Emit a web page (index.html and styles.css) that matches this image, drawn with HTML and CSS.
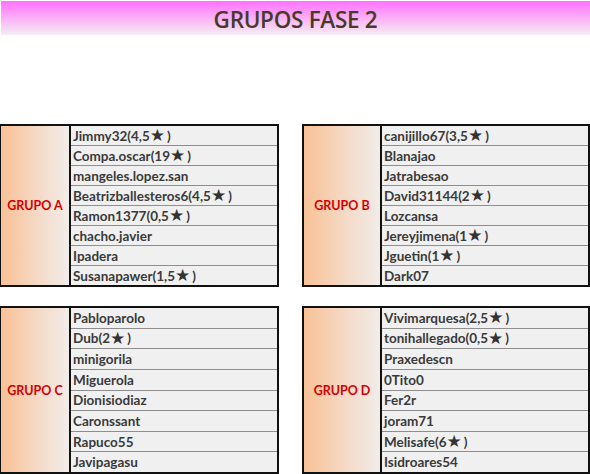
FILE: index.html
```html
<!DOCTYPE html>
<html>
<head>
<meta charset="utf-8">
<link rel="stylesheet" href="styles.css">
</head>
<body>
<header class="banner"><h1 class="title">GRUPOS FASE 2</h1></header>
<main class="groups">
  <section class="group group-left">
    <div class="label"><span>GRUPO A</span></div>
    <ul class="names">
      <li>Jimmy32(4,5<span class="star">★</span>)</li>
      <li>Compa.oscar(19<span class="star">★</span>)</li>
      <li>mangeles.lopez.san</li>
      <li>Beatrizballesteros6(4,5<span class="star">★</span>)</li>
      <li>Ramon1377(0,5<span class="star">★</span>)</li>
      <li>chacho.javier</li>
      <li>Ipadera</li>
      <li>Susanapawer(1,5<span class="star">★</span>)</li>
    </ul>
  </section>
  <section class="group group-right">
    <div class="label"><span>GRUPO B</span></div>
    <ul class="names">
      <li>canijillo67(3,5<span class="star">★</span>)</li>
      <li>Blanajao</li>
      <li>Jatrabesao</li>
      <li>David31144(2<span class="star">★</span>)</li>
      <li>Lozcansa</li>
      <li>Jereyjimena(1<span class="star">★</span>)</li>
      <li>Jguetin(1<span class="star">★</span>)</li>
      <li>Dark07</li>
    </ul>
  </section>
  <section class="group group-left tall">
    <div class="label"><span>GRUPO C</span></div>
    <ul class="names">
      <li>Pabloparolo</li>
      <li>Dub(2<span class="star">★</span>)</li>
      <li>minigorila</li>
      <li>Miguerola</li>
      <li>Dionisiodiaz</li>
      <li>Caronssant</li>
      <li>Rapuco55</li>
      <li>Javipagasu</li>
    </ul>
  </section>
  <section class="group group-right tall">
    <div class="label"><span>GRUPO D</span></div>
    <ul class="names">
      <li>Vivimarquesa(2,5<span class="star">★</span>)</li>
      <li>tonihallegado(0,5<span class="star">★</span>)</li>
      <li>Praxedescn</li>
      <li>0Tito0</li>
      <li>Fer2r</li>
      <li>joram71</li>
      <li>Melisafe(6<span class="star">★</span>)</li>
      <li>Isidroares54</li>
    </ul>
  </section>
</main>
</body>
</html>
```
FILE: styles.css
```css
html, body {
  margin: 0;
  padding: 0;
  background: #ffffff;
}
body {
  width: 590px;
  height: 474px;
  overflow: hidden;
  font-family: Lato, "Open Sans", "Liberation Sans", sans-serif;
}
.banner {
  margin: 1px 0 0 1px;
  height: 34px;
  background: linear-gradient(to bottom, #ff70ff 0%, #fbb6f6 55%, #f4eef4 100%);
  display: flex;
  align-items: center;
  justify-content: center;
}
.title {
  margin: 0;
  font-family: "Open Sans", Lato, sans-serif;
  font-size: 22.5px;
  font-weight: 600;
  color: #483a26;
  letter-spacing: -0.3px;
  padding-top: 2px;
}
.groups {
  margin-top: 89px;
  display: grid;
  grid-template-columns: 280px 288px;
  column-gap: 23px;
  row-gap: 19px;
  margin-left: -1px;
}
.group {
  display: flex;
  border: 2px solid #111111;
  height: 159px;
}
.group.tall {
  height: 164px;
}
.label {
  background: linear-gradient(to right, #f9c196 0%, #f4dccb 60%, #f1ece9 100%);
  border-right: 2px solid #111111;
  display: flex;
  align-items: center;
  justify-content: center;
  font-weight: 700;
  font-size: 12.5px;
  color: #d40000;
}
.group-left .label { width: 68px; }
.group-right .label { width: 76px; }
.names {
  list-style: none;
  margin: 0;
  padding: 0;
  flex: 1;
  display: flex;
  flex-direction: column;
  background: #f0f0f0;
}
.names li {
  flex: 1;
  display: flex;
  align-items: center;
  padding-left: 2px;
  border-bottom: 1px solid #8e8e8e;
  font-size: 13.5px;
  font-weight: 700;
  color: #3a3a3a;
  white-space: nowrap;
}
.names li:last-child {
  border-bottom: none;
}
.star {
  font-family: "DejaVu Sans", sans-serif;
  font-size: 17px;
  color: #333333;
  margin-right: 2px;
  line-height: 1;
}
```
